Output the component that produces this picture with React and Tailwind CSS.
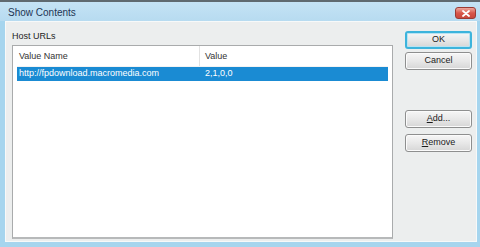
import React from "react";

const font = { fontFamily: '"Liberation Sans", Arial, sans-serif' };

function Btn({ children, focused }) {
  return (
    <div
      className={`h-[18px] w-[67px] flex items-center justify-center rounded-[3px] text-[9px] text-[#1a1a1a] bg-gradient-to-b from-[#f6f6f6] via-[#e8e8e8] to-[#d6d6d6] ${
        focused
          ? "border-2 border-[#3db4dc] shadow-[inset_0_0_0_1px_#b9e3f2]"
          : "border border-[#8e8f8f] shadow-[inset_0_0_0_1px_#fbfbfb]"
      }`}
    >
      {children}
    </div>
  );
}

export default function App() {
  return (
    <div
      className="w-[480px] h-[247px] flex flex-col bg-[#a6d5ee] border-t-2 border-[#5f6a70] overflow-hidden"
      style={font}
    >
      {/* title bar */}
      <div className="h-[19px] flex items-center justify-between pl-[8px] pr-[4px] bg-gradient-to-b from-[#c4e3f5] to-[#b7dbf0]">
        <span className="text-[10px] text-[#1d3553] pt-[2px]">Show Contents</span>
        <div className="mt-[3px] w-[21px] h-[12px] rounded-[3px] border border-[#9a3b34] bg-gradient-to-b from-[#eba79e] via-[#d8564a] to-[#c9483c] flex items-center justify-center">
          <svg width="8" height="7" viewBox="0 0 8 7">
            <path d="M1 1 L7 6 M7 1 L1 6" stroke="#ffffff" strokeWidth="1.8" strokeLinecap="round" />
          </svg>
        </div>
      </div>

      {/* client area */}
      <div className="flex-1 ml-[5px] mr-[3px] mb-[5px] bg-[#eceeee] border border-[#f7f9f9] flex">
        <div className="flex flex-col pl-[6px] pt-[9px] pb-[2px]">
          <div className="text-[9px] leading-[11px] text-[#1e1e1e]">Host URLs</div>
          <div className="mt-[3px] flex-1 w-[381px] bg-white border border-[#a9abac] border-b-2 border-b-[#b7b9ba] flex flex-col pl-[4px] pr-[4px]">
            <div className="h-[21px] flex items-center text-[9px] text-[#333333] border-b border-[#f3f3f3]">
              <div className="w-[183px] pl-[2px] pt-[2px] border-r border-[#e2e2e2] h-full flex items-center">Value Name</div>
              <div className="pl-[5px] pt-[2px]">Value</div>
            </div>
            <div className="h-[14px] flex items-center bg-[#1a8bd3] text-white text-[9px]">
              <div className="w-[184px] pl-[2px]">http://fpdownload.macromedia.com</div>
              <div className="pl-[4px]">2,1,0,0</div>
            </div>
          </div>
        </div>
        <div className="flex flex-col pl-[12px] pt-[9px]">
          <Btn focused>OK</Btn>
          <div className="mt-[3px]"><Btn>Cancel</Btn></div>
          <div className="mt-[40px]"><Btn><span><span className="underline">A</span>dd...</span></Btn></div>
          <div className="mt-[6px]"><Btn><span><span className="underline">R</span>emove</span></Btn></div>
        </div>
      </div>
    </div>
  );
}
